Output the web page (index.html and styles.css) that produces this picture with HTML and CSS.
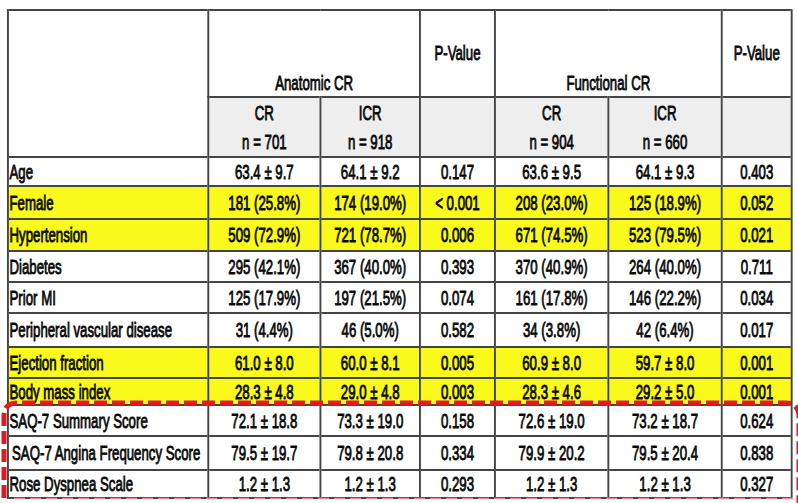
FILE: index.html
```html
<!DOCTYPE html>
<html>
<head>
<meta charset="utf-8">
<link rel="stylesheet" href="styles.css">
</head>
<body>
<div class="page">
<table class="tbl">
  <colgroup>
    <col class="c-label"><col class="c-val"><col class="c-val2"><col class="c-p"><col class="c-val3"><col class="c-val4"><col class="c-p2">
  </colgroup>
  <thead>
    <tr class="h1">
      <th rowspan="2" class="blank"></th>
      <th colspan="2" class="grp">Anatomic CR</th>
      <th class="pv">P-Value</th>
      <th colspan="2" class="grp">Functional CR</th>
      <th class="pv">P-Value</th>
    </tr>
    <tr class="h2">
      <th>CR<br>n = 701</th>
      <th>ICR<br>n = 918</th>
      <th></th>
      <th>CR<br>n = 904</th>
      <th>ICR<br>n = 660</th>
      <th></th>
    </tr>
  </thead>
  <tbody>
    <tr><td>Age</td><td>63.4 ± 9.7</td><td>64.1 ± 9.2</td><td>0.147</td><td>63.6 ± 9.5</td><td>64.1 ± 9.3</td><td>0.403</td></tr>
    <tr class="hl"><td>Female</td><td>181 (25.8%)</td><td>174 (19.0%)</td><td>&lt; 0.001</td><td>208 (23.0%)</td><td>125 (18.9%)</td><td>0.052</td></tr>
    <tr class="hl"><td>Hypertension</td><td>509 (72.9%)</td><td>721 (78.7%)</td><td>0.006</td><td>671 (74.5%)</td><td>523 (79.5%)</td><td>0.021</td></tr>
    <tr><td>Diabetes</td><td>295 (42.1%)</td><td>367 (40.0%)</td><td>0.393</td><td>370 (40.9%)</td><td>264 (40.0%)</td><td>0.711</td></tr>
    <tr><td>Prior MI</td><td>125 (17.9%)</td><td>197 (21.5%)</td><td>0.074</td><td>161 (17.8%)</td><td>146 (22.2%)</td><td>0.034</td></tr>
    <tr><td>Peripheral vascular disease</td><td>31 (4.4%)</td><td>46 (5.0%)</td><td>0.582</td><td>34 (3.8%)</td><td>42 (6.4%)</td><td>0.017</td></tr>
    <tr class="hl"><td>Ejection fraction</td><td>61.0 ± 8.0</td><td>60.0 ± 8.1</td><td>0.005</td><td>60.9 ± 8.0</td><td>59.7 ± 8.0</td><td>0.001</td></tr>
    <tr class="hl"><td>Body mass index</td><td>28.3 ± 4.8</td><td>29.0 ± 4.8</td><td>0.003</td><td>28.3 ± 4.6</td><td>29.2 ± 5.0</td><td>0.001</td></tr>
    <tr><td>SAQ-7 Summary Score</td><td>72.1 ± 18.8</td><td>73.3 ± 19.0</td><td>0.158</td><td>72.6 ± 19.0</td><td>73.2 ± 18.7</td><td>0.624</td></tr>
    <tr><td class="indent">SAQ-7 Angina Frequency Score</td><td>79.5 ± 19.7</td><td>79.8 ± 20.8</td><td>0.334</td><td>79.9 ± 20.2</td><td>79.5 ± 20.4</td><td>0.838</td></tr>
    <tr><td>Rose Dyspnea Scale</td><td>1.2 ± 1.3</td><td>1.2 ± 1.3</td><td>0.293</td><td>1.2 ± 1.3</td><td>1.2 ± 1.3</td><td>0.327</td></tr>
  </tbody>
</table>
<svg class="dash" width="798" height="110" viewBox="0 400 798 110">
  <path class="dash-thick" d="M4 498 L4 416 Q4 403 17 403 L786 403 Q797 403 799 414 L799 505"/>
  <path class="dash-thin" d="M14 498.5 L798 498.5"/>
</svg>
</div>
</body>
</html>
```

FILE: styles.css
```css
html, body {
  margin: 0;
  padding: 0;
  background: #ffffff;
}
.page {
  position: relative;
  width: 798px;
  height: 503px;
  overflow: hidden;
  padding: 9px 0 0 7px;
  box-sizing: border-box;
}
/* The source uses a condensed face (Arial Narrow); the table is laid out
   at full width and compressed horizontally to reproduce it. */
.tbl {
  border-collapse: collapse;
  table-layout: fixed;
  width: 1244px;
  transform: scaleX(0.63);
  transform-origin: 0 0;
  font-family: "Liberation Sans", Arial, sans-serif;
  font-size: 21px;
  color: #0a0a0a;
  -webkit-text-stroke: 0.9px #0a0a0a;
  border: 2px solid #7d7d7d;
  border-left-width: 3px;
  border-right-width: 3px;
}
.c-label { width: 318px; }
.c-val { width: 178px; }
.c-val2 { width: 158px; }
.c-p { width: 119px; }
.c-val3 { width: 180px; }
.c-val4 { width: 180px; }
.c-p2 { width: 111px; }
.tbl th, .tbl td {
  border-style: solid;
  border-color: #444444;
  border-width: 2px 3px;
  padding: 0;
  text-align: center;
  vertical-align: middle;
  font-weight: normal;
  white-space: nowrap;
  overflow: hidden;
}
.tbl td:first-child {
  text-align: left;
  padding-left: 1px;
}
.tbl td.indent { padding-left: 5px; }
.h1 { height: 87px; }
.h1 .grp { vertical-align: bottom; padding-bottom: 1px; }
.h1 .pv { padding-bottom: 2px; }
.h2 { height: 58px; }
.h2 th {
  background: #eeeeee;
  line-height: 29px;
}
.tbl th.blank { background: #fff; }
.hl td { background: #f9f91c; }
tbody tr:nth-child(1) { height: 29px; }
tbody tr:nth-child(2) { height: 33px; }
tbody tr:nth-child(3) { height: 32px; }
tbody tr:nth-child(4) { height: 31px; }
tbody tr:nth-child(5) { height: 31px; }
tbody tr:nth-child(6) { height: 34px; }
tbody tr:nth-child(7) { height: 31px; }
tbody tr:nth-child(8) { height: 27px; }
tbody tr:nth-child(9) { height: 31px; }
tbody tr:nth-child(10) { height: 34px; }
tbody tr:nth-child(11) { height: 28px; }
.dash {
  position: absolute;
  left: 0;
  top: 400px;
}
.dash-thick {
  fill: none;
  stroke: #e3191f;
  stroke-width: 5;
  stroke-dasharray: 13 5;
}
.dash-thin {
  fill: none;
  stroke: #ec8a8e;
  stroke-width: 1.5;
  stroke-dasharray: 11 5;
}
```
